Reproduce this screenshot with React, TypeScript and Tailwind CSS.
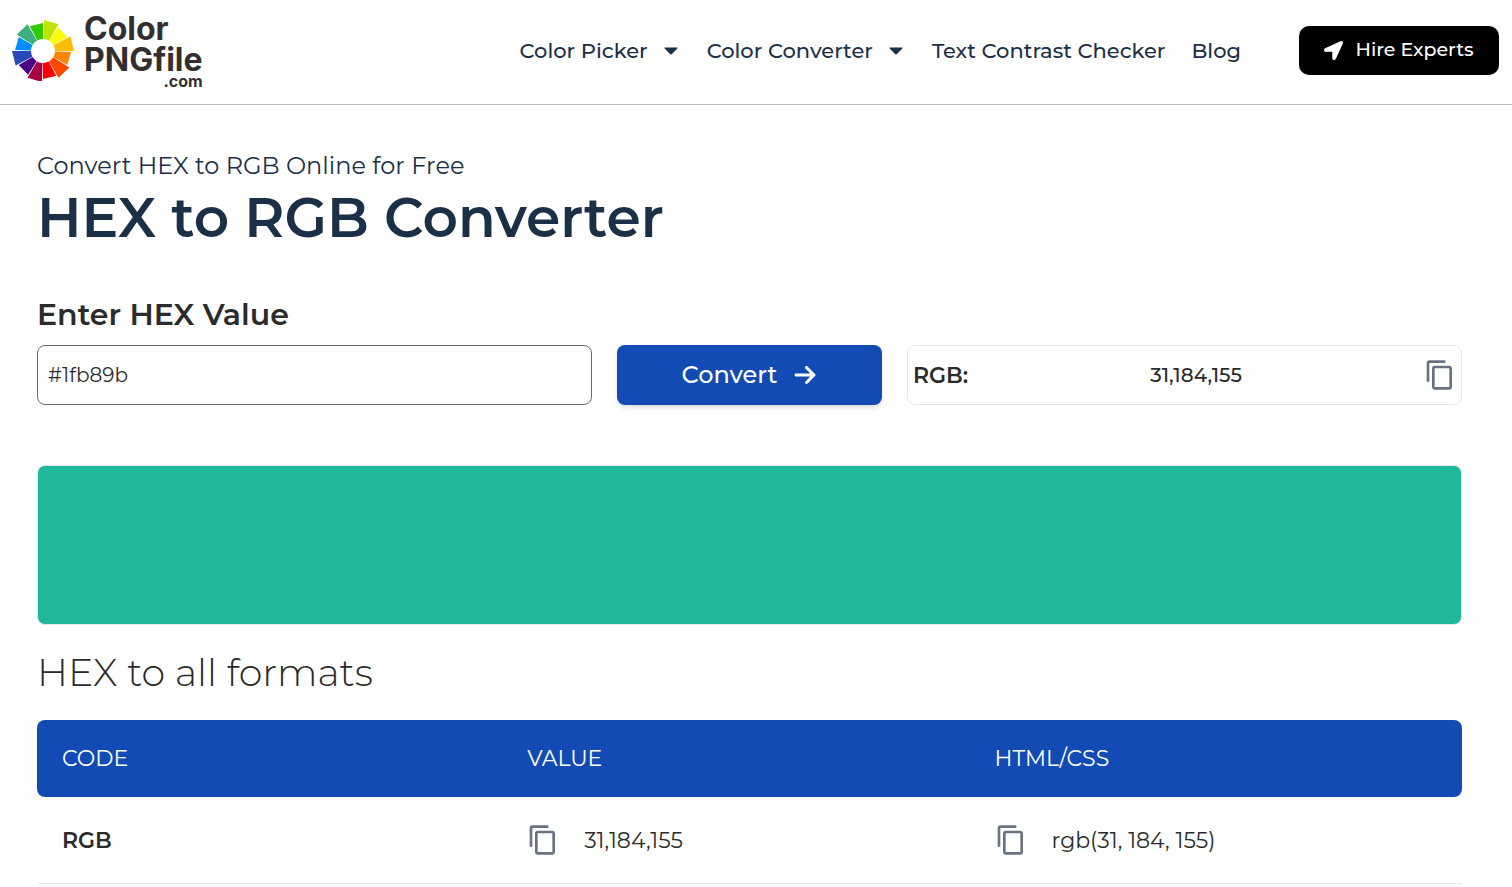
import { useState } from 'react';
import { FaLocationArrow } from 'react-icons/fa';
import { FaArrowRight } from 'react-icons/fa6';
import { MdContentCopy } from 'react-icons/md';

const wheelColors = [
  '#c0e300', '#fdfb00', '#ffbb00', '#ff8400', '#ff4700', '#fd0000',
  '#aa0044', '#4b0086', '#2a48b8', '#0090ff', '#3eb080', '#2fca00',
];

function polar(radius: number, degrees: number) {
  const a = (degrees * Math.PI) / 180;
  return `${(radius * Math.sin(a)).toFixed(2)} ${(-radius * Math.cos(a)).toFixed(2)}`;
}

function ColorWheel() {
  return (
    <svg viewBox="-31 -32 62 62" className="size-[62px] shrink-0" aria-hidden="true">
      {wheelColors.map((color, i) => {
        const outer = i % 2 === 0 ? 31 : 28;
        const start = i * 30 + 2;
        const end = start + 28;
        return (
          <path
            key={color}
            fill={color}
            d={`M${polar(12, start)} L${polar(outer, start)} L${polar(outer, end)} L${polar(12, end)} A12 12 0 0 0 ${polar(12, start)}Z`}
          />
        );
      })}
    </svg>
  );
}

function Caret() {
  return (
    <svg viewBox="0 0 14 8" className="h-2 w-3.5" fill="currentColor" aria-hidden="true">
      <path d="M1 .5h12c.6 0 .8.5.4.9L7.7 7.3c-.4.4-1 .4-1.4 0L.6 1.4C.2 1 .4.5 1 .5z" />
    </svg>
  );
}

function CopyButton({ value }: { value: string }) {
  return (
    <button
      type="button"
      aria-label={`Copy ${value}`}
      className="shrink-0 cursor-pointer text-gray-500"
      onClick={() => navigator.clipboard?.writeText(value)}
    >
      <MdContentCopy className="size-8" />
    </button>
  );
}

function parseHex(hex: string) {
  const m = /^#?([0-9a-f]{2})([0-9a-f]{2})([0-9a-f]{2})$/i.exec(hex.trim());
  return m ? m.slice(1).map((part) => parseInt(part, 16)) : null;
}

export default function App() {
  const [hex, setHex] = useState('#1fb89b');
  const [rgb, setRgb] = useState([31, 184, 155]);

  const plain = rgb.join(',');
  const css = `rgb(${rgb.join(', ')})`;

  return (
    <div className="min-h-screen bg-white font-[Montserrat,Inter,sans-serif] text-[#2b2b2b]">
      <header className="flex h-[105px] items-center justify-between border-b border-[#bdbdbd] pr-[13px] pb-1 pl-3">
        <a href="#" className="flex items-center gap-2.5 font-[Inter,sans-serif] font-bold text-[#332f30]">
          <ColorWheel />
          <span className="flex flex-col text-[32px] leading-[31px]">
            <span>Color</span>
            <span>PNGfile</span>
            <span className="text-right text-base leading-[13px]">.com</span>
          </span>
        </a>
        <div className="flex items-center gap-[58px]">
          <nav className="flex items-center gap-[26px] pt-0.5 text-[21px] font-medium text-[#1b2f47]">
            <button type="button" className="flex cursor-pointer items-center gap-4 pr-[3px]">
              Color Picker <Caret />
            </button>
            <button type="button" className="flex cursor-pointer items-center gap-4 pr-[3px]">
              Color Converter <Caret />
            </button>
            <a href="#">Text Contrast Checker</a>
            <a href="#">Blog</a>
          </nav>
          <a
            href="#"
            className="flex h-[49px] w-[200px] items-center justify-center gap-3 rounded-[10px] bg-black text-[19px] font-medium text-white"
          >
            <FaLocationArrow className="size-[19px]" />
            Hire Experts
          </a>
        </div>
      </header>

      <main className="pt-[45px] pr-[50px] pl-[37px]">
        <p className="text-2xl leading-8 text-[#1b2f47]">Convert HEX to RGB Online for Free</p>
        <h1 className="text-[55px] leading-[72px] font-semibold text-[#1b2f47]">HEX to RGB Converter</h1>

        <form
          className="mt-10"
          onSubmit={(e) => {
            e.preventDefault();
            const next = parseHex(hex);
            if (next) setRgb(next);
          }}
        >
          <label htmlFor="hex" className="block text-[30px] leading-[42px] font-semibold">
            Enter HEX Value
          </label>
          <div className="mt-[9px] grid grid-cols-[555fr_265fr_555fr] gap-[25px]">
            <input
              id="hex"
              value={hex}
              onChange={(e) => setHex(e.target.value)}
              className="h-[60px] min-w-0 rounded-lg border border-[#6b6b6b] px-2.5 text-xl"
            />
            <button
              type="submit"
              className="flex h-[60px] cursor-pointer items-center justify-center gap-4 rounded-lg bg-[#124bb3] text-2xl font-medium text-white shadow-md"
            >
              Convert <FaArrowRight className="size-6" />
            </button>
            <div className="flex h-[60px] items-center justify-between rounded-lg border border-gray-200 px-[5px]">
              <span className="text-[22px] font-semibold">RGB:</span>
              <output htmlFor="hex" className="text-xl font-medium">{plain}</output>
              <CopyButton value={plain} />
            </div>
          </div>
        </form>

        <div
          className="mt-[60px] h-40 rounded-lg border border-gray-200"
          style={{ backgroundColor: `rgb(${plain})` }}
        />

        <h2 className="mt-6 text-[38px] leading-[48px] font-light">HEX to all formats</h2>

        <table className="mt-[23px] w-full table-fixed border-separate border-spacing-0 text-left text-[22px]">
          <thead className="text-white">
            <tr className="h-[77px]">
              <th scope="col" className="w-[34.4%] rounded-l-lg bg-[#124bb3] pl-[25px] font-normal">CODE</th>
              <th scope="col" className="bg-[#124bb3] font-normal">VALUE</th>
              <th scope="col" className="rounded-r-lg bg-[#124bb3] font-normal">HTML/CSS</th>
            </tr>
          </thead>
          <tbody>
            <tr className="h-[87px]">
              <th scope="row" className="border-b border-gray-200 pl-[25px] font-semibold">RGB</th>
              <td className="border-b border-gray-200">
                <div className="flex items-center gap-[25px]">
                  <CopyButton value={plain} />
                  {plain}
                </div>
              </td>
              <td className="border-b border-gray-200">
                <div className="flex items-center gap-[25px]">
                  <CopyButton value={css} />
                  {css}
                </div>
              </td>
            </tr>
          </tbody>
        </table>
      </main>
    </div>
  );
}
